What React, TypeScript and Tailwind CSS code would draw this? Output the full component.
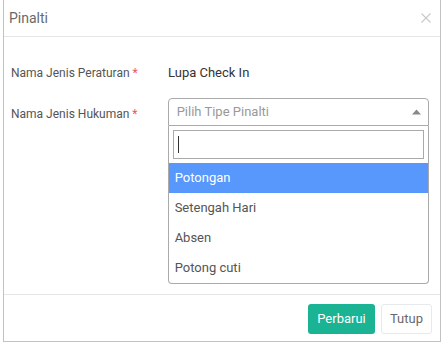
import React from "react";

export default function App() {
  const font = { fontFamily: "Roboto, 'Liberation Sans', sans-serif" };
  return (
    <div className="w-[447px] h-[347px] bg-white overflow-hidden" style={font}>
      <div className="ml-[3px] w-[438px] h-[342px] border-x border-b border-[#c2c2c2] flex flex-col">
        <div className="h-[37px] border-b border-[#e5e5e5] flex items-center justify-between pl-[5px] pr-[9px]">
          <span className="text-[14px] text-[#676a6c]">Pinalti</span>
          <svg width="10" height="10" viewBox="0 0 10 10" className="mt-[-1px]">
            <path d="M0.5 0.5 L9.5 9.5 M9.5 0.5 L0.5 9.5" stroke="#c8c8c8" strokeWidth="1.1" />
          </svg>
        </div>
        <div className="flex-1 pl-[7px] pr-[11px] pt-[27px]">
          <div className="flex items-center h-[18px] text-[13px]">
            <div className="w-[157px] text-[#555] text-[12px]">
              Nama Jenis Peraturan <span className="text-[#ed5565]">*</span>
            </div>
            <div className="text-[#333]">Lupa Check In</div>
          </div>
          <div className="flex mt-[16px] text-[13px]">
            <div className="w-[157px] text-[#555] text-[12px] pt-[7px]">
              Nama Jenis Hukuman <span className="text-[#ed5565]">*</span>
            </div>
            <div className="w-[262px]">
              <div className="h-[28px] border border-[#aaa] rounded-t-[4px] flex items-center justify-between pl-[8px] pr-[7px]">
                <span className="text-[#999] text-[13px]">Pilih Tipe Pinalti</span>
                <svg width="9" height="6" viewBox="0 0 9 6">
                  <path d="M0 5.5 L4.5 0.5 L9 5.5 Z" fill="#888" />
                </svg>
              </div>
              <div className="border-x border-b border-[#aaa] rounded-b-[4px]">
                <div className="px-[4px] pt-[4px] pb-[4px]">
                  <div className="h-[29px] border border-[#aaa] flex items-center pl-[4px]">
                    <div className="w-px h-[17px] bg-[#333]" />
                  </div>
                </div>
                <div className="h-[30px] bg-[#5897fb] text-white flex items-center pl-[6px]">Potongan</div>
                <div className="h-[30px] text-[#555] flex items-center pl-[6px]">Setengah Hari</div>
                <div className="h-[30px] text-[#555] flex items-center pl-[6px]">Absen</div>
                <div className="h-[30px] text-[#555] flex items-center pl-[6px]">Potong cuti</div>
              </div>
            </div>
          </div>
        </div>
        <div className="h-[47px] border-t border-[#e5e5e5] flex items-center justify-end gap-[6px] pr-[8px] pt-[1px]">
          <button className="h-[30px] w-[67px] rounded-[3px] bg-[#1ab394] text-white text-[13px]">Perbarui</button>
          <button className="h-[30px] w-[51px] rounded-[3px] border border-[#e7eaec] bg-white text-[#676a6c] text-[13px]">Tutup</button>
        </div>
      </div>
    </div>
  );
}
